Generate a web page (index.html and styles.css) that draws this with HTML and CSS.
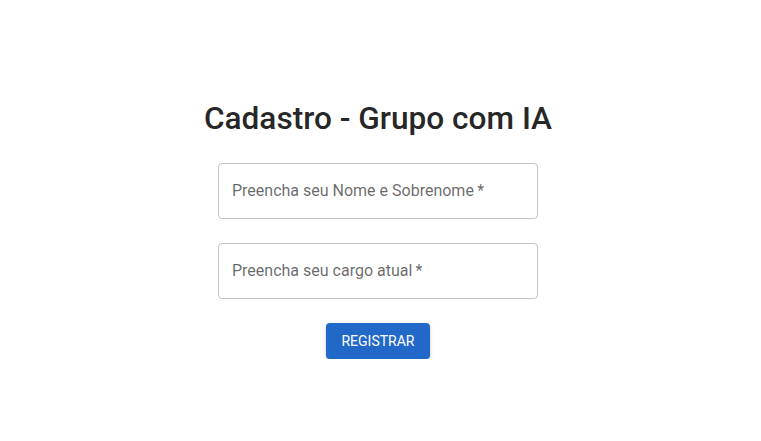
FILE: index.html
```html
<!DOCTYPE html>
<html lang="pt">
<head>
<meta charset="utf-8">
<title>Cadastro</title>
<link rel="stylesheet" href="styles.css">
</head>
<body>
<main class="page">
  <form class="form">
    <h1 class="title">Cadastro - Grupo com IA</h1>
    <div class="field"><span class="label">Preencha seu Nome e Sobrenome&thinsp;*</span></div>
    <div class="field"><span class="label">Preencha seu cargo atual&thinsp;*</span></div>
    <button type="button" class="btn">REGISTRAR</button>
  </form>
</main>
</body>
</html>
```
FILE: styles.css
```css
html, body { margin: 0; padding: 0; background: #fff; }
body { font-family: Roboto, "Helvetica Neue", Arial, sans-serif; }
.page {
  display: flex;
  justify-content: center;
  padding: 98px 5px 0 0;
}
.form {
  display: flex;
  flex-direction: column;
  align-items: center;
}
.title {
  margin: 0 0 24px;
  font-size: 31.6px;
  font-weight: 500;
  line-height: 41px;
  color: rgba(0,0,0,0.87);
}
.field {
  box-sizing: border-box;
  width: 320px;
  height: 56px;
  border: 1px solid rgba(0,0,0,0.23);
  border-radius: 4px;
  display: flex;
  align-items: center;
  padding: 0 13px 2px;
  margin-bottom: 24px;
}
.label {
  font-size: 16px;
  color: rgba(0,0,0,0.6);
}
.btn {
  margin-top: 0;
  width: 104px;
  height: 36px;
  border: 0;
  border-radius: 4px;
  background: #2168c9;
  color: #fff;
  font-family: Roboto, sans-serif;
  font-size: 14px;
  font-weight: 400;
  letter-spacing: 0;
  box-shadow: 0 3px 1px -2px rgba(0,0,0,0.2), 0 2px 2px 0 rgba(0,0,0,0.14), 0 1px 5px 0 rgba(0,0,0,0.12);
}
```
